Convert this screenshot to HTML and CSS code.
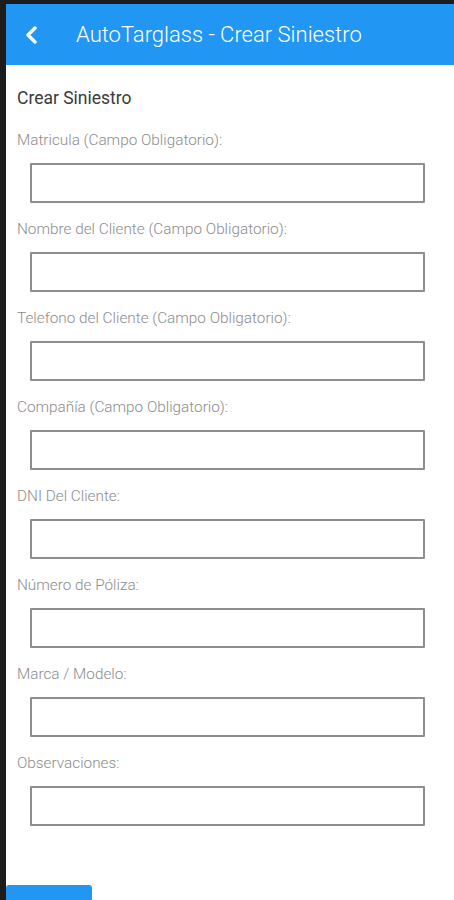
FILE: index.html
```html
<!DOCTYPE html>
<html>
<head>
    <title>AutoTarglass - Crear Siniestro</title>
    <link rel="stylesheet" href="styles.css">
</head>
<body>
    <div class="screen">
        <header class="toolbar">
            <span class="back">
                <svg width="14" height="18" viewBox="0 0 14 18">
                    <path d="M11 2 L4 9 L11 16" fill="none" stroke="#fff" stroke-width="3.4" stroke-linecap="round" stroke-linejoin="round"/>
                </svg>
            </span>
            <h1>AutoTarglass - Crear Siniestro</h1>
        </header>
        <form class="content" id="siniestroForm">
            <h2>Crear Siniestro</h2>

            <label for="matricula">Matricula (Campo Obligatorio):</label>
            <input type="text" id="matricula" name="matricula">

            <label for="nombre">Nombre del Cliente (Campo Obligatorio):</label>
            <input type="text" id="nombre" name="nombre">

            <label for="telefono">Telefono del Cliente (Campo Obligatorio):</label>
            <input type="text" id="telefono" name="telefono">

            <label for="compania">Compañía (Campo Obligatorio):</label>
            <input type="text" id="compania" name="compania">

            <label for="dni">DNI Del Cliente:</label>
            <input type="text" id="dni" name="dni">

            <label for="poliza">Número de Póliza:</label>
            <input type="text" id="poliza" name="poliza">

            <label for="marca">Marca / Modelo:</label>
            <input type="text" id="marca" name="marca">

            <label for="observaciones">Observaciones:</label>
            <input type="text" id="observaciones" name="observaciones">

            <button type="submit" aria-label="Guardar"></button>
        </form>
    </div>
</body>
</html>
```

FILE: styles.css
```css
html, body {
    margin: 0;
    padding: 0;
    background-color: #fff;
}
body {
    font-family: Roboto, "Liberation Sans", Arial, sans-serif;
}
.screen {
    border-top: 4px solid #1c1c1c;
    border-left: 6px solid #1c1c1c;
    min-height: 896px;
    overflow: hidden;
}
.toolbar {
    height: 61px;
    background-color: #2196f3;
    display: flex;
    align-items: center;
}
.back {
    display: flex;
    margin-left: 18px;
    width: 14px;
    height: 18px;
}
.toolbar h1 {
    margin: 0 0 0 38px;
    font-size: 22px;
    font-weight: 300;
    color: #fff;
}
.content {
    padding: 23px 29px 0 11px;
}
.content h2 {
    margin: 0 0 22px;
    font-size: 17.5px;
    line-height: 20px;
    font-weight: 400;
    color: #3a3a3a;
}
label {
    display: block;
    font-size: 15.3px;
    line-height: 20px;
    font-weight: 300;
    color: #8c8c8c;
    margin-bottom: 13px;
}
input {
    display: block;
    box-sizing: border-box;
    width: calc(100% - 13px);
    height: 40px;
    margin: 0 0 16px 13px;
    border: 2px solid #8e8e8e;
    border-radius: 1px;
    background: #fff;
}
button {
    display: block;
    margin: 59px 0 0 -11px;
    width: 86px;
    height: 40px;
    border: none;
    border-radius: 3px 3px 0 0;
    background-color: #2196f3;
}
```
